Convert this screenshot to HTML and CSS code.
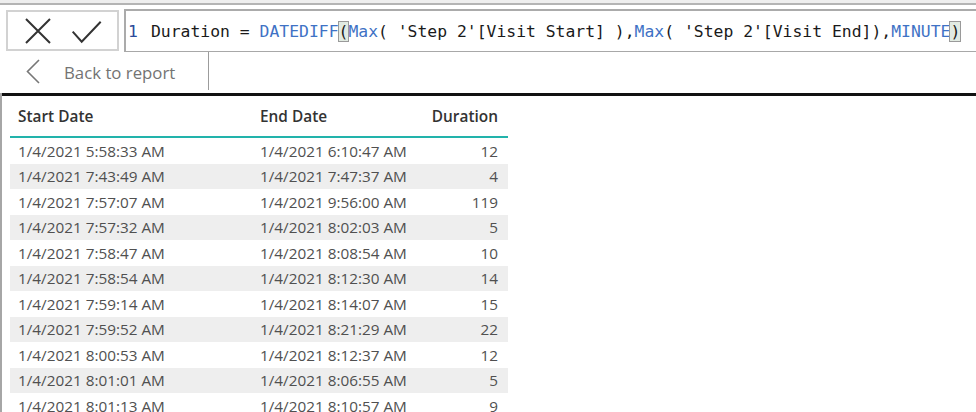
FILE: index.html
```html
<!DOCTYPE html>
<html>
<head>
<meta charset="utf-8">
<link rel="stylesheet" href="styles.css">
</head>
<body>
<div class="topband"></div>
<div class="toolbar">
  <div class="btnbox">
    <svg class="btnicons" width="109" height="36" viewBox="0 0 109 36">
      <path d="M18 7 L42 31 M42 7 L18 31" stroke="#333" stroke-width="2" fill="none"/>
      <path d="M64.7 19.7 L73.7 29.7 L92.7 9.7" stroke="#333" stroke-width="2" fill="none"/>
    </svg>
  </div>
  <div class="formula">
    <span class="ln">1</span><span class="code">Duration = <span class="fn">DATEDIFF</span><span class="br">(</span><span class="fn">Max</span>( 'Step 2'[Visit Start] ),<span class="fn">Max</span>( 'Step 2'[Visit End]),<span class="fn">MINUTE</span><span class="br">)</span></span>
  </div>
</div>
<div class="backrow">
  <div class="back">
    <svg class="chev" width="16" height="26" viewBox="0 0 16 26">
      <path d="M13 1 L1.5 12.5 L13 24" stroke="#777" stroke-width="1.6" fill="none"/>
    </svg>
    <span class="backtext">Back to report</span>
  </div>
</div>
<div class="content">
  <div class="rule"></div>
  <div class="table">
    <div class="row head"><div>Start Date</div><div>End Date</div><div class="num">Duration</div></div>
    <div class="row"><div>1/4/2021 5:58:33 AM</div><div>1/4/2021 6:10:47 AM</div><div class="num">12</div></div>
    <div class="row alt"><div>1/4/2021 7:43:49 AM</div><div>1/4/2021 7:47:37 AM</div><div class="num">4</div></div>
    <div class="row"><div>1/4/2021 7:57:07 AM</div><div>1/4/2021 9:56:00 AM</div><div class="num">119</div></div>
    <div class="row alt"><div>1/4/2021 7:57:32 AM</div><div>1/4/2021 8:02:03 AM</div><div class="num">5</div></div>
    <div class="row"><div>1/4/2021 7:58:47 AM</div><div>1/4/2021 8:08:54 AM</div><div class="num">10</div></div>
    <div class="row alt"><div>1/4/2021 7:58:54 AM</div><div>1/4/2021 8:12:30 AM</div><div class="num">14</div></div>
    <div class="row"><div>1/4/2021 7:59:14 AM</div><div>1/4/2021 8:14:07 AM</div><div class="num">15</div></div>
    <div class="row alt"><div>1/4/2021 7:59:52 AM</div><div>1/4/2021 8:21:29 AM</div><div class="num">22</div></div>
    <div class="row"><div>1/4/2021 8:00:53 AM</div><div>1/4/2021 8:12:37 AM</div><div class="num">12</div></div>
    <div class="row alt"><div>1/4/2021 8:01:01 AM</div><div>1/4/2021 8:06:55 AM</div><div class="num">5</div></div>
    <div class="row"><div>1/4/2021 8:01:13 AM</div><div>1/4/2021 8:10:57 AM</div><div class="num">9</div></div>
  </div>
</div>
</body>
</html>
```
FILE: styles.css
```css
html, body {
  margin: 0;
  padding: 0;
  background: #ffffff;
  overflow: hidden;
}
body {
  width: 976px;
  height: 412px;
  font-family: "Open Sans", "Noto Sans", sans-serif;
}
.topband {
  height: 3px;
  background: #eeeeee;
  border-bottom: 2px solid #b4b4b4;
}
.toolbar {
  display: flex;
  align-items: flex-start;
  padding: 4px 0 0 6px;
  gap: 5px;
  height: 43px;
}
.btnbox {
  box-sizing: border-box;
  width: 113px;
  height: 41px;
  margin-top: 1px;
  border: 2px solid #d2d2d2;
  display: flex;
}
.btnicons {
  display: block;
}
.formula {
  flex: 1;
  box-sizing: border-box;
  height: 43px;
  border-top: 2px solid #ababab;
  border-left: 2px solid #ababab;
  border-bottom: 1px solid #a8a8a8;
  display: flex;
  align-items: center;
  padding-left: 2px;
  font-family: "DejaVu Sans Mono", "Liberation Mono", monospace;
  font-size: 16.4px;
  color: #1a1a1a;
  white-space: pre;
}
.ln {
  display: inline-block;
  width: 23px;
  color: #2b4a9a;
}
.fn {
  color: #3f72c5;
}
.br {
  background: #e2ebe2;
  outline: 1px solid #9a9a9a;
}
.backrow {
  height: 41px;
  display: flex;
}
.back {
  box-sizing: border-box;
  width: 209px;
  height: 38px;
  border-right: 1px solid #9c9c9c;
  display: flex;
  align-items: center;
  padding-left: 26px;
}
.chev {
  display: block;
  margin-top: 1px;
}
.backtext {
  margin-left: 22px;
  font-size: 16.8px;
  color: #737373;
  margin-top: 2px;
}
.content {
  border-left: 2px solid #a6a6a6;
  height: 320px;
}
.rule {
  height: 3px;
  background: #111111;
}
.table {
  margin-left: 8px;
  width: 498px;
}
.row {
  display: grid;
  grid-template-columns: 242px 176px 80px;
  height: 25.5px;
  align-items: center;
  font-size: 15.3px;
  color: #505050;
}
.row > div {
  padding-left: 8px;
  white-space: nowrap;
}
.row > .num {
  text-align: right;
  padding-left: 0;
  padding-right: 10px;
}
.row.alt {
  background: #eeeeee;
}
.row.head {
  height: 39px;
  border-bottom: 2px solid #22b3ab;
  font-weight: 600;
  font-size: 15.4px;
  color: #333333;
  padding-top: 1px;
  box-sizing: content-box;
}
```
